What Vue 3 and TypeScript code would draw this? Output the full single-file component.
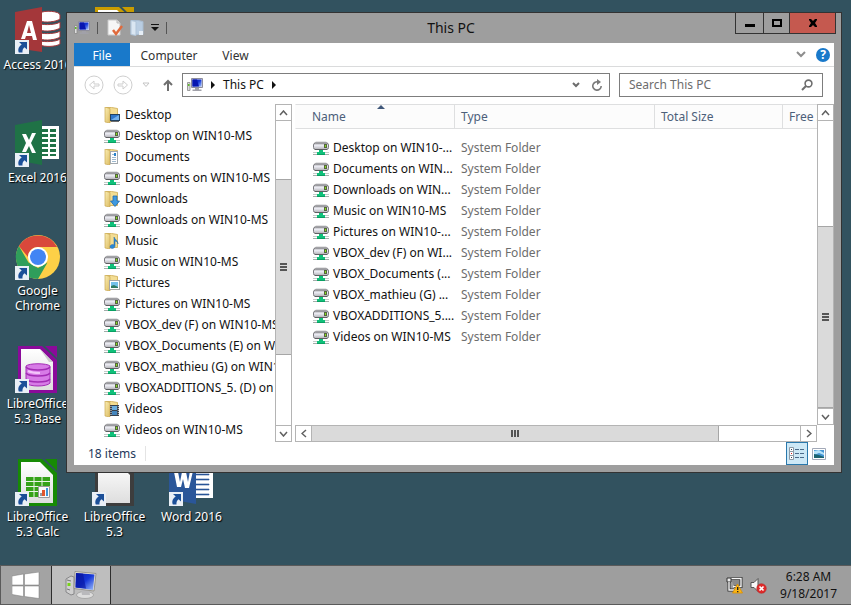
<script setup lang="ts">
type Kind = 'drive' | 'desktop' | 'documents' | 'downloads' | 'music' | 'pictures' | 'videos'

interface Place { name: string; kind: Kind }
interface Shortcut { label: string; icon: string; column: number; row: number }

const shortcuts: Shortcut[] = [
  { label: 'Access 2016', icon: 'access', column: 1, row: 1 },
  { label: 'Excel 2016', icon: 'excel', column: 1, row: 2 },
  { label: 'Google Chrome', icon: 'chrome', column: 1, row: 3 },
  { label: 'LibreOffice 5.3 Base', icon: 'base', column: 1, row: 4 },
  { label: 'LibreOffice 5.3 Calc', icon: 'calc', column: 1, row: 5 },
  { label: '', icon: 'draw', column: 2, row: 1 },
  { label: 'LibreOffice 5.3', icon: 'office', column: 2, row: 5 },
  { label: 'Word 2016', icon: 'word', column: 3, row: 5 },
]

const places: Place[] = [
  { name: 'Desktop', kind: 'desktop' },
  { name: 'Desktop on WIN10-MS', kind: 'drive' },
  { name: 'Documents', kind: 'documents' },
  { name: 'Documents on WIN10-MS', kind: 'drive' },
  { name: 'Downloads', kind: 'downloads' },
  { name: 'Downloads on WIN10-MS', kind: 'drive' },
  { name: 'Music', kind: 'music' },
  { name: 'Music on WIN10-MS', kind: 'drive' },
  { name: 'Pictures', kind: 'pictures' },
  { name: 'Pictures on WIN10-MS', kind: 'drive' },
  { name: 'VBOX_dev (F) on WIN10-MS', kind: 'drive' },
  { name: 'VBOX_Documents (E) on WIN10-MS', kind: 'drive' },
  { name: 'VBOX_mathieu (G) on WIN10-MS', kind: 'drive' },
  { name: 'VBOXADDITIONS_5. (D) on WIN10-MS', kind: 'drive' },
  { name: 'Videos', kind: 'videos' },
  { name: 'Videos on WIN10-MS', kind: 'drive' },
]

const files: string[] = [
  'Desktop on WIN10-...',
  'Documents on WIN...',
  'Downloads on WIN...',
  'Music on WIN10-MS',
  'Pictures on WIN10-...',
  'VBOX_dev (F) on WI...',
  'VBOX_Documents (...',
  'VBOX_mathieu (G) ...',
  'VBOXADDITIONS_5....',
  'Videos on WIN10-MS',
]
</script>

<template>
  <svg class="sprites" aria-hidden="true">
    <defs>
      <linearGradient id="gFolder" x1="0" x2="1" y1="0" y2="1">
        <stop offset="0" stop-color="#fbeeb4" /><stop offset="1" stop-color="#dcbc62" />
      </linearGradient>
      <linearGradient id="gScreen" x1="0" x2="1" y1="0" y2="1">
        <stop offset="0" stop-color="#0a1cae" /><stop offset="0.5" stop-color="#1637d8" /><stop offset="1" stop-color="#9fc0fa" />
      </linearGradient>
      <linearGradient id="gPaper" x1="0" x2="0" y1="0" y2="1">
        <stop offset="0" stop-color="#ffffff" /><stop offset="1" stop-color="#dedede" />
      </linearGradient>
      <linearGradient id="gDrive" x1="0" x2="0" y1="0" y2="1">
        <stop offset="0" stop-color="#b2b2b4" /><stop offset="0.4" stop-color="#ececf4" /><stop offset="1" stop-color="#b0b0b4" />
      </linearGradient>
    </defs>

    <symbol id="drive" viewBox="0 0 16 16">
      <path d="M3 1.500h10l2 1.500H1z" fill="#c9c9cb" />
      <rect x="0.500" y="3" width="15" height="6.500" rx="2" fill="url(#gDrive)" stroke="#7b7b80" />
      <path d="M2 9.500h12" stroke="#5f5f62" />
      <rect x="11" y="4" width="3" height="4" fill="#56663e" />
      <rect x="12" y="5" width="1" height="2" fill="#86e01e" />
      <path d="M6 10h4v2h2v3H4v-3h2z" fill="#10c07a" />
      <path d="M0 12h4v1H0zM12 12h4v1h-4z" fill="#c3ccc9" />
      <path d="M0 14h4v1H0zM12 14h4v1h-4z" fill="#a3adaa" />
      <path d="M4 14h8v1H4z" fill="#0a9f62" />
    </symbol>

    <symbol id="folder" viewBox="0 0 16 16">
      <path d="M1.500 0.500h6l6 1v13h-12z" fill="#f3dd93" stroke="#d5b766" />
      <path d="M1 0l5 1.500V16L1 15z" fill="url(#gFolder)" stroke="#c9a850" stroke-width="0.700" />
    </symbol>
    <symbol id="desktop" viewBox="0 0 16 16">
      <use href="#folder" />
      <rect x="6.500" y="7.500" width="9" height="6" fill="#2f76c9" stroke="#23425f" />
      <path d="M7 13l8-5v5z" fill="#73b1ec" /><path d="M7 14.500h8" stroke="#6d6d6d" />
    </symbol>
    <symbol id="documents" viewBox="0 0 16 16">
      <use href="#folder" />
      <rect x="6.500" y="2.500" width="7" height="12" fill="#fff" stroke="#a3a9ae" />
      <path d="M8 5.500h2M8 8.500h4M8 10.500h4M8 12.500h4" stroke="#9db8ce" /><path d="M10 4h2v3h-2z" fill="#2b84cc" />
    </symbol>
    <symbol id="downloads" viewBox="0 0 16 16">
      <use href="#folder" />
      <path d="M9 5h4v5h2.500L11 15.500 6.500 10H9z" fill="#3f9ae0" stroke="#2169ac" stroke-width="0.800" />
    </symbol>
    <symbol id="music" viewBox="0 0 16 16">
      <use href="#folder" />
      <path d="M10 4c1 3 4 3 4 7 0-2-2-3-3-3v5c0 3-5 3-5 1 0-2 2-3 4-2z" fill="#2b8ad6" stroke="#1e66a8" stroke-width="0.500" />
    </symbol>
    <symbol id="pictures" viewBox="0 0 16 16">
      <use href="#folder" />
      <rect x="5.500" y="5.500" width="10" height="9" fill="#fff" stroke="#a5a5a5" />
      <rect x="7" y="7" width="7" height="6" fill="#74c0ea" /><path d="M7 13v-2l3-1 4 2v1z" fill="#2f7a62" />
    </symbol>
    <symbol id="videos" viewBox="0 0 16 16">
      <use href="#folder" />
      <rect x="6" y="4" width="9" height="11" fill="#37414d" />
      <rect x="8" y="5" width="5" height="4" fill="#69aee0" /><rect x="8" y="10" width="5" height="4" fill="#4385bd" />
      <path d="M7 5v10M14.300 5v10" stroke="#e5e5e5" stroke-dasharray="1 1" />
    </symbol>

    <symbol id="computer" viewBox="0 0 32 28">
      <path d="M1 8l5-3 3 1v17l-3 1-5-3z" fill="#cfcfcf" stroke="#77777a" stroke-width="0.800" />
      <path d="M2 9l4 1M2 18l3 1" stroke="#777" /><path d="M2.500 12h3v3h-3z" fill="#77d316" />
      <ellipse cx="20" cy="24" rx="8.500" ry="3.500" fill="#dcdcdc" stroke="#9a9a9a" stroke-width="0.700" />
      <path d="M16 18l8 1 1 5h-8z" fill="#b9b9bc" />
      <path d="M10 0.500l21 2-2 17.500-20-2.500z" fill="#e6e4dc" stroke="#8a8880" stroke-width="0.800" />
      <path d="M11 2l18.500 1.500-1.500 15.500L10.500 16.500z" fill="url(#gScreen)" />
      <path d="M11 2l7 .6 3 15-10.500-1.100z" fill="#0716a0" opacity="0.650" />
    </symbol>
    <symbol id="computer-small" viewBox="0 0 16 14">
      <path d="M.5 4.500h2.500v8H.500z" fill="#ddd" stroke="#888" stroke-width="0.800" /><path d="M1 6h1.500v2H1z" fill="#5dbb27" />
      <path d="M4.500.500h11v9h-11z" fill="#d6d8e4" stroke="#8d8d9c" />
      <path d="M5.500 1.500h9v7h-9z" fill="url(#gScreen)" /><path d="M5.500 1.500h4.500l2 7H5.500z" fill="#0716b0" />
      <path d="M8 10h4v1.500h2.500V13h-9v-1.500H8z" fill="#a1a1a9" />
    </symbol>

    <symbol id="badge" viewBox="0 0 14 14">
      <path d="M0 0h14v14H0z" fill="#e9eff6" />
      <path d="M4 2h8v7.500L9.500 7.200C8 8.700 7.200 10 7.500 12.500H3.800C2.500 9 4 6.300 6.700 4.500z" fill="#1b4f98" />
    </symbol>

    <symbol id="access" viewBox="0 0 48 48">
      <g fill="#fff" stroke="#a4373a" stroke-width="1">
        <path d="M26 34v4c4 2 16 2 20-1v-5c-4 3-15 3-20 2z" />
        <path d="M26 26v6c5 2 16 1 20-2v-6c-4 3-15 3-20 2z" />
        <path d="M26 17v6c5 2 16 1 20-2v-6c-4 3-15 3-20 2z" />
        <path d="M26 8v6c5 2 16 1 20-2V8c0-4-16-5-20-2z" />
      </g>
      <path d="M1 5l27-5v45L1 41z" fill="#a4373a" />
      <path fill-rule="evenodd" d="M7 32l6-18h5l5 19h-4l-1-4h-6l-1 3zm6-6h4l-2-8z" fill="#fff" />
    </symbol>
    <symbol id="excel" viewBox="0 0 48 48">
      <path d="M27 6h18v33H27z" fill="#fff" />
      <path d="M28 9h6v3h-6zm8 0h6v3h-6zM28 14h6v3h-6zm8 0h6v3h-6zM28 19h6v3h-6zm8 0h6v3h-6zM28 24h6v3h-6zm8 0h6v3h-6zM28 29h6v3h-6zm8 0h6v3h-6zM28 34h6v2h-6zm8 0h6v2h-6z" fill="#1f7246" />
      <path d="M1 5l27-5v45L1 40z" fill="#1f7246" />
      <path d="M8 14l4 0 3 6 3-7h4l-5 10 5 10h-4l-3-7-3 6H8l4-9z" fill="#fff" />
    </symbol>
    <symbol id="word" viewBox="0 0 48 48">
      <path d="M27 6h18v33H27z" fill="#fff" />
      <path d="M28 10h13v1H28zm0 5h13v1H28zm0 5h13v1H28zm0 5h13v1H28zm0 5h13v1H28zm0 5h13v1H28z" fill="#2a5699" stroke="#2a5699" stroke-width="0.600" />
      <path d="M1 5l27-5v45L1 40z" fill="#2a5699" />
      <path d="M6 13h4l2 10 2-10h4l2 10 2-11h3l-4 17h-4l-2-9-2 8h-4z" fill="#fff" />
    </symbol>
    <symbol id="chrome" viewBox="0 0 48 48">
      <circle cx="24" cy="24" r="22" fill="#fdd047" />
      <path d="M4.900 13A22 22 0 0 0 24 46l9.500-16.500L24 35l-9.500-5.500z" fill="#2f9e5b" />
      <path d="M4.900 13A22 22 0 0 1 43.100 14H24c-6 0-10 5-10 10z" fill="#d9483b" />
      <circle cx="24" cy="24" r="10" fill="#fff" /><circle cx="24" cy="24" r="8" fill="#4285f4" />
    </symbol>
    <symbol id="base" viewBox="0 0 48 48">
      <path d="M4 0h24l15 14v33H4z" fill="#8a0a9a" /><path d="M31 0h12v12z" fill="#8a0a9a" />
      <path d="M7 3h19l13 13v28H7z" fill="url(#gPaper)" /><path d="M26 3l13 13h-4z" fill="#ccc" />
      <path d="M12 20v17c3 4 21 4 24 0V20c-3-3-21-3-24 0z" fill="#d77be6" stroke="#a32cb5" />
      <path d="M12 21c3 4 21 4 24 0M12 27c3 4 21 4 24 0M12 33c3 4 21 4 24 0" fill="none" stroke="#a32cb5" stroke-width="1.500" />
      <path d="M14 25c4 2 8 2 12 2" stroke="#f3c4fa" stroke-width="2" fill="none" />
    </symbol>
    <symbol id="calc" viewBox="0 0 48 48">
      <path d="M4 0h24l15 14v33H4z" fill="#178a05" /><path d="M31 0h12v12z" fill="#178a05" />
      <path d="M7 3h19l13 13v28H7z" fill="url(#gPaper)" />
      <path d="M12 18h24v20H12z" fill="#35a218" />
      <path d="M12 22.500h24M12 27.500h24M12 32.500h24M20 18v20M28 18v20" stroke="#e9f5e6" />
      <path d="M24.500 27.500h11v11h-11z" fill="#fafafa" stroke="#9a9a9a" />
      <path d="M26 34h2v3h-2z" fill="#999" /><path d="M28 31h3v6h-3z" fill="#e0562c" /><path d="M32 29h2v8h-2z" fill="#3e96d6" />
    </symbol>
    <symbol id="office" viewBox="0 0 48 48">
      <path d="M4 0h24l15 14v33H4z" fill="#3d3d3d" /><path d="M7 3h19l13 13v28H7z" fill="url(#gPaper)" />
    </symbol>
    <symbol id="draw" viewBox="0 0 48 48">
      <path d="M4 0h24l15 14v33H4z" fill="#c99c00" /><path d="M31 0h12v12z" fill="#c99c00" />
      <path d="M7 3h19l13 13v28H7z" fill="url(#gPaper)" />
    </symbol>
  </svg>

  <div class="screen">
    <main class="desktop">
      <div class="shortcuts">
        <button
          v-for="s in shortcuts" :key="s.icon" type="button" class="shortcut"
          :style="{ gridColumn: s.column, gridRow: s.row }"
        >
          <span class="shortcut-icon">
            <svg class="app-icon"><use :href="'#' + s.icon" /></svg>
            <svg class="badge"><use href="#badge" /></svg>
          </span>
          <span class="shortcut-label">{{ s.label }}</span>
        </button>
      </div>

      <section class="window">
        <header class="titlebar">
          <div class="quick">
            <svg class="pc-icon"><use href="#computer-small" /></svg>
            <i class="sep"></i>
            <button type="button" aria-label="Properties">
              <svg width="16" height="18" viewBox="0 0 16 18">
                <path d="M1 1h9l3 3v12H1z" fill="#f6f6f6" stroke="#c9c9c9" /><path d="M10 1v3h3" fill="#ddd" stroke="#bbb" />
                <path d="M6 11l3 4 6-8" fill="none" stroke="#e06a3c" stroke-width="2.500" />
              </svg>
            </button>
            <button type="button" aria-label="New folder">
              <svg width="14" height="18" viewBox="0 0 14 18">
                <path d="M1 1.500h7l5 1v13H1z" fill="#b9cde2" stroke="#a9bcd0" /><path d="M1 1.500l5 1v14l-5-1z" fill="#dae6f2" stroke="#b0c4d8" />
                <path d="M9 12h4v4H9z" fill="#e6eef6" />
              </svg>
            </button>
            <button type="button" aria-label="Customize">
              <svg width="8" height="7" viewBox="0 0 8 7"><path d="M0 0h8v1H0zM0 3h8L4 7z" fill="#111" /></svg>
            </button>
            <i class="sep"></i>
          </div>
          <h1>This PC</h1>
          <div class="controls">
            <button type="button" class="minimize" aria-label="Minimize">
              <svg width="10" height="9" viewBox="0 0 10 9"><path d="M0 5h10v3H0z" fill="#000" /></svg>
            </button>
            <button type="button" class="maximize" aria-label="Maximize">
              <svg width="10" height="8" viewBox="0 0 10 8"><path d="M1 1h8v6H1z" fill="none" stroke="#000" stroke-width="2" /></svg>
            </button>
            <button type="button" class="close" aria-label="Close">
              <svg width="10" height="8" viewBox="0 0 10 8"><path d="M1 0h2l2 2 2-2h2v1L7 4l2 3v1H7L5 6 3 8H1V7l2-3-2-3z" fill="#000" /></svg>
            </button>
          </div>
        </header>

        <div class="client">
          <nav class="tabs">
            <button type="button" class="tab file">File</button>
            <button type="button" class="tab computer">Computer</button>
            <button type="button" class="tab view">View</button>
            <span class="tab-tools">
              <button type="button" aria-label="Expand the ribbon">
                <svg width="10" height="7" viewBox="0 0 10 7"><path d="M1 1l4 4 4-4" fill="none" stroke="#8d8d8d" stroke-width="2" /></svg>
              </button>
              <button type="button" class="help" aria-label="Help">?</button>
            </span>
          </nav>

          <div class="navbar">
            <button type="button" aria-label="Back">
              <svg width="20" height="20" viewBox="0 0 20 20" fill="none" stroke="#cfcfcf">
                <circle cx="10" cy="10" r="9" /><path d="M15 9h-5V6L5.500 10l4.500 4v-3h5z" />
              </svg>
            </button>
            <button type="button" aria-label="Forward">
              <svg width="20" height="20" viewBox="0 0 20 20" fill="none" stroke="#cfcfcf">
                <circle cx="10" cy="10" r="9" /><path d="M5 9h5V6l4.500 4-4.500 4v-3H5z" />
              </svg>
            </button>
            <button type="button" aria-label="Recent locations">
              <svg width="8" height="6" viewBox="0 0 8 6"><path d="M1 1h6L4 4.500z" fill="none" stroke="#c4c4c4" /></svg>
            </button>
            <button type="button" class="up" aria-label="Up">
              <svg width="10" height="12" viewBox="0 0 10 12"><path d="M5 12V2M1 6l4-4 4 4" fill="none" stroke="#6f6f6f" stroke-width="2" /></svg>
            </button>
            <div class="address">
              <svg class="pc-icon"><use href="#computer-small" /></svg>
              <svg class="crumb" width="5" height="8" viewBox="0 0 5 8"><path d="M0 0l4 4-4 4z" fill="#111" /></svg>
              <a href="#">This PC</a>
              <svg class="crumb" width="5" height="8" viewBox="0 0 5 8"><path d="M0 0l4 4-4 4z" fill="#111" /></svg>
              <button type="button" class="previous" aria-label="Previous locations">
                <svg width="8" height="6" viewBox="0 0 8 6"><path d="M1 1l3 3 3-3" fill="none" stroke="#6c6c6c" stroke-width="2" /></svg>
              </button>
              <button type="button" aria-label="Refresh">
                <svg width="12" height="12" viewBox="0 0 12 12">
                  <path d="M7.500 3A4.200 4.200 0 1 0 10.200 7" fill="none" stroke="#7a7a7a" stroke-width="1.600" /><path d="M6 0l4 3-4 3z" fill="#7a7a7a" />
                </svg>
              </button>
            </div>
            <label class="search">
              <input type="text" placeholder="Search This PC" aria-label="Search This PC" />
              <svg width="12" height="12" viewBox="0 0 12 12">
                <circle cx="7.500" cy="4.500" r="3.400" fill="none" stroke="#6e6e6e" stroke-width="1.600" /><path d="M5 7l-4 4" stroke="#6e6e6e" stroke-width="2" />
              </svg>
            </label>
          </div>

          <div class="panes">
            <aside class="sidebar">
              <ul>
                <li v-for="p in places" :key="p.name">
                  <a href="#"><svg class="item-icon"><use :href="'#' + p.kind" /></svg><span>{{ p.name }}</span></a>
                </li>
              </ul>
            </aside>
            <div class="scroll vertical">
              <button type="button" aria-label="Scroll places up"><svg width="9" height="6" viewBox="0 0 9 6"><path d="M1 5l3.500-4L8 5" /></svg></button>
              <div class="track">
                <i class="lead places"></i><div class="thumb places"><i></i><i></i><i></i></div><i class="rest places"></i>
              </div>
              <button type="button" aria-label="Scroll places down"><svg width="9" height="6" viewBox="0 0 9 6"><path d="M1 1l3.500 4L8 1" /></svg></button>
            </div>

            <div class="content">
              <div class="listing">
                <div class="files">
                  <table>
                    <thead>
                      <tr>
                        <th class="name"><svg class="sorted" width="8" height="4" viewBox="0 0 8 4"><path d="M4 0l4 4H0z" fill="#40587a" /></svg>Name</th>
                        <th class="type">Type</th>
                        <th class="size">Total Size</th>
                        <th class="free">Free Space</th>
                      </tr>
                    </thead>
                    <tbody>
                      <tr v-for="f in files" :key="f">
                        <td class="name"><a href="#"><svg class="item-icon"><use href="#drive" /></svg><span>{{ f }}</span></a></td>
                        <td>System Folder</td>
                        <td></td>
                        <td></td>
                      </tr>
                    </tbody>
                  </table>
                </div>
                <div class="scroll horizontal">
                  <button type="button" aria-label="Scroll left"><svg width="6" height="9" viewBox="0 0 6 9"><path d="M5 1L1 4.500 5 8" /></svg></button>
                  <div class="track">
                    <div class="thumb across"><i></i><i></i><i></i></div><i class="rest across"></i>
                  </div>
                  <button type="button" aria-label="Scroll right"><svg width="6" height="9" viewBox="0 0 6 9"><path d="M1 1l4 3.500L1 8" /></svg></button>
                </div>
              </div>
              <div class="scroll vertical files-scroll">
                <button type="button" aria-label="Scroll files up"><svg width="9" height="6" viewBox="0 0 9 6"><path d="M1 5l3.500-4L8 5" /></svg></button>
                <div class="track">
                  <i class="lead list"></i><div class="thumb list"><i></i><i></i><i></i></div>
                </div>
                <button type="button" aria-label="Scroll files down"><svg width="9" height="6" viewBox="0 0 9 6"><path d="M1 1l3.500 4L8 1" /></svg></button>
              </div>
            </div>
          </div>

          <footer class="status">
            <span class="count">18 items</span>
            <button type="button" class="mode active" aria-label="Details">
              <svg width="16" height="14" viewBox="0 0 16 14">
                <path d="M.5.500h4v4h-4zM.5 4.500h4v4h-4zM.5 8.500h4v4h-4z" fill="#fff" stroke="#8d9aa6" />
                <path d="M2 2h1v1H2zM2 10h1v1H2z" fill="#345" /><path d="M2 6h1v1H2z" fill="#d22" />
                <path d="M6 2.500h4M6 6.500h4M6 10.500h4M11 2.500h4M11 6.500h4M11 10.500h4" stroke="#4c6b8a" />
              </svg>
            </button>
            <button type="button" class="mode" aria-label="Large icons">
              <svg width="14" height="12" viewBox="0 0 14 12">
                <path d="M.5.500h13v11H.500z" fill="#fff" stroke="#a2a9b8" /><path d="M2 2h10v8H2z" fill="#4596d4" />
                <path d="M2 3l5-1 5 3v2L7 5 2 7z" fill="#b6e2f8" /><path d="M2 10V6l5 1 5 2v1z" fill="#1c6370" />
              </svg>
            </button>
          </footer>
        </div>
      </section>
    </main>

    <footer class="taskbar">
      <button type="button" class="start" aria-label="Start">
        <svg width="28" height="27" viewBox="0 0 28 27">
          <path d="M0 4l11.500-2v11H0zM12.500 2L27 0v13H12.500zM0 14h11.500v10.500L0 22.500zM12.500 14H27v12.500l-14.500-2z" fill="#fff" stroke="#777" stroke-width="0.500" />
        </svg>
      </button>
      <button type="button" class="task" aria-label="This PC">
        <svg width="32" height="28"><use href="#computer" /></svg>
      </button>
      <div class="tray">
        <svg width="17" height="17" viewBox="0 0 17 17">
          <path d="M5 1.500h10v8H8" fill="#8a8a8a" stroke="#333" stroke-width="3" /><path d="M5 1.500h10v8H7" fill="none" stroke="#f5f5f5" stroke-width="1.400" />
          <path d="M1 1h4v4H1z" fill="#eee" stroke="#333" /><path d="M3 5v8h5" fill="none" stroke="#333" stroke-width="3" /><path d="M3 5v8h5" fill="none" stroke="#f5f5f5" stroke-width="1.400" />
          <path d="M11.500 7l5 9h-10z" fill="#fbb615" stroke="#d98d00" stroke-width="0.800" /><path d="M11 10h1.400v3H11zM11 14h1.400v1.300H11z" fill="#222" />
        </svg>
        <svg width="17" height="17" viewBox="0 0 17 17">
          <path d="M1 5.500h3l4-4v13l-4-4H1z" fill="#f8f8f8" stroke="#555" />
          <circle cx="11.500" cy="11.500" r="4.800" fill="#df2b2b" stroke="#b51e1e" stroke-width="0.500" /><path d="M9.500 9.500l4 4M13.500 9.500l-4 4" stroke="#fff" stroke-width="1.600" />
        </svg>
        <time datetime="2017-09-18T06:28">6:28 AM<br />9/18/2017</time>
      </div>
    </footer>
  </div>
</template>

<style>
body { margin: 0; }
</style>

<style scoped>
.sprites { position: absolute; width: 0; height: 0; }
.screen {
  display: flex; flex-direction: column; min-height: 100vh; overflow: hidden;
  font-family: "Noto Sans", "Open Sans", sans-serif; font-size: 12px; line-height: 15px; color: #111;
  background: #32525f;
}
button { margin: 0; padding: 0; border: 0; background: none; font: inherit; color: inherit; display: flex; align-items: center; justify-content: center; }
a { color: inherit; text-decoration: none; }
svg { display: block; flex: none; }
.desktop { position: relative; flex: 1; }

.shortcuts { display: grid; grid-template-columns: repeat(3, 77px); grid-template-rows: repeat(5, 113px); margin-left: -1px; }
.shortcut { flex-direction: column; justify-content: flex-start; padding-top: 7px; color: #fff; text-shadow: 1px 1px 1px #000; }
.shortcut-icon { position: relative; width: 48px; height: 48px; }
.app-icon { width: 48px; height: 48px; }
.badge { position: absolute; left: 1px; bottom: 1px; width: 14px; height: 14px; }
.shortcut-label { padding-top: 2px; width: 76px; text-align: center; }

.window {
  position: absolute; inset: 12px 9px 92px 66px; display: flex; flex-direction: column;
  box-sizing: border-box; padding: 0 7px 7px; border: 1px solid #333; background: #9e9e9e;
}
.titlebar { display: grid; grid-template-columns: 1fr auto 1fr; height: 30px; }
.quick { display: flex; align-items: center; gap: 7px; padding-bottom: 1px; }
.quick .sep { width: 1px; height: 12px; background: #555; }
.quick .sep + button { padding-left: 2px; }
.pc-icon { width: 16px; height: 14px; }
h1 { margin: 0 6px 0 0; font-size: 14px; font-weight: 400; line-height: 30px; }
.controls { display: flex; justify-self: end; align-self: start; margin-right: -2px; height: 21px; }
.controls button { box-sizing: border-box; width: 27px; border: 1px solid #333; border-top: 0; margin-left: -1px; }
.controls .minimize { width: 29px; }
.controls .close { width: 47px; background: #c5594f; }

.client { flex: 1; display: flex; flex-direction: column; min-height: 0; background: #fff; }
.tabs { display: flex; align-items: stretch; height: 23px; border-bottom: 1px solid #dadbdc; }
.tab { padding-top: 2px; color: #333; }
.tab.file { box-sizing: border-box; width: 56px; height: 23px; background: #1979ca; color: #fff; }
.tab.computer { width: 78px; }
.tab.view { width: 55px; }
.tab-tools { display: flex; align-items: center; gap: 10px; margin-left: auto; padding-right: 4px; }
.help { width: 14px; height: 14px; border-radius: 50%; background: #1979ca; color: #fff; font-weight: 700; }

.navbar { display: flex; align-items: center; gap: 9px; box-sizing: border-box; height: 37px; padding: 0 11px 2px 10px; }
.navbar .up { padding-left: 4px; }
.address, .search { display: flex; align-items: center; box-sizing: border-box; height: 24px; border: 1px solid #7d7d7d; }
.address { flex: 1; padding: 0 6px 0 4px; }
.crumb { margin: 0 7px 0 8px; }
.address .previous { margin-left: auto; margin-right: 11px; }
.search { width: 204px; padding: 0 9px; }
.search input { flex: 1; min-width: 0; padding: 0; border: 0; outline: 0; background: none; font: inherit; }
.search input::placeholder { color: #6d6d6d; opacity: 1; }

.panes { flex: 1; display: flex; min-height: 0; }
.sidebar { width: 201px; overflow: hidden; }
ul { margin: 0; padding: 0; list-style: none; }
li a { display: flex; align-items: center; gap: 5px; height: 21px; padding-left: 30px; white-space: nowrap; }
.item-icon { width: 16px; height: 16px; }

.scroll { display: flex; box-sizing: border-box; background: #fff; border: 1px solid #b4b4b4; }
.scroll button { width: 15px; height: 15px; }
.scroll button path { fill: none; stroke: #606060; stroke-width: 1.5px; }
.track { flex: 1; display: flex; }
.vertical { flex-direction: column; width: 17px; }
.vertical .track { flex-direction: column; border: solid #b4b4b4; border-width: 1px 0; }
.horizontal { height: 17px; }
.horizontal .track { border: solid #b4b4b4; border-width: 0 1px; }
.thumb { display: flex; align-items: center; justify-content: center; gap: 1px; background: #dadada; }
.thumb i { background: #555; }
.vertical .thumb { flex-direction: column; border: solid #a6a6a6; border-width: 1px 0; }
.vertical .thumb i { width: 7px; height: 2px; }
.horizontal .thumb { border-right: 1px solid #a6a6a6; }
.horizontal .thumb i { width: 2px; height: 7px; }
.lead.places { flex: 58; }
.thumb.places { flex: 174; }
.rest.places { flex: 70; }
.lead.list { flex: 106; }
.thumb.list { flex: 181; }
.thumb.across { flex: 408; }
.rest.across { flex: 82; }

.content { flex: 1; display: flex; min-width: 0; margin-left: 3px; }
.listing { flex: 1; display: flex; flex-direction: column; min-width: 0; }
.files { flex: 1; overflow: hidden; }
.files-scroll { height: calc(100% - 17px); }
table { width: 100%; table-layout: fixed; border-collapse: separate; border-spacing: 0; }
th, td { box-sizing: border-box; padding: 0 0 0 6px; text-align: left; font-weight: 400; white-space: nowrap; overflow: hidden; }
th { position: relative; height: 25px; border: solid #dedfe0; border-width: 1px 0 1px 1px; background: #fcfcfc; color: #4c607a; }
th.name { width: 159px; padding-left: 16px; border-left-color: #fcfcfc; }
th.type { width: 200px; }
th.size { width: 128px; }
.sorted { position: absolute; left: 81px; top: 0; }
td { height: 21px; color: #6d6d6d; padding-left: 7px; }
td.name { padding-left: 18px; color: #111; }
td a { display: flex; align-items: center; gap: 4px; }
tbody::before { content: ""; display: block; height: 8px; }

.status { display: flex; align-items: stretch; height: 23px; padding-right: 4px; }
.count { padding: 0 9px 0 14px; margin: 4px auto 4px 0; border-right: 1px solid #e4e4e4; color: #1e395b; }
.mode { box-sizing: border-box; width: 22px; }
.mode.active { background: #cde8f6; border: 1px solid #2a78ac; }

.taskbar { display: flex; box-sizing: border-box; height: 40px; border: solid #5a5a5a; border-width: 1px 0 1px 1px; background: #9e9e9e; }
.start { width: 50px; background: #a3a3a3; }
.task { box-sizing: border-box; width: 60px; border: 1px solid #2d2d2d; border-width: 0 1px; background: #bebebe; }
.tray { display: flex; align-items: center; gap: 7px; margin-left: auto; padding-right: 14px; }
.tray time { padding-left: 6px; text-align: center; line-height: 17px; }
</style>
